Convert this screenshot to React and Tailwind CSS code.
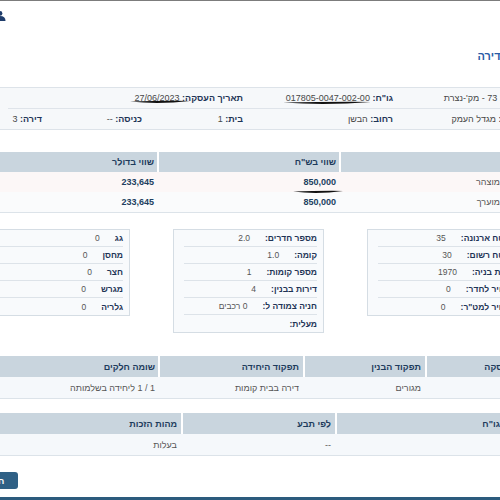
import React from "react";

const T1 = ["w-[189px]", "w-[182px]", "w-[189px]"];
const T1P = ["pr-[14px]", "pr-[3px]", "pr-[3px]"];
const T2 = ["w-[103px]", "w-[122px]", "w-[145px]", "w-[190px]"];
const T2P = ["pr-[6px]", "pr-[4px]", "pr-[4px]", "pr-[3px]"];
const T3 = ["w-[193px]", "w-[154px]", "w-[213px]"];
const T3P = ["pr-[14px]", "pr-[4px]", "pr-[4px]"];

function Scribble({ className }) {
  return (
    <svg className={`absolute pointer-events-none ${className}`} viewBox="0 0 100 6" preserveAspectRatio="none">
      <path d="M0 2.4 Q50 7 100 1.4 Q50 1 0 2.4Z" fill="#111" />
    </svg>
  );
}

function L({ children }) {
  return <span className="font-bold text-[#1e3456]">{children}</span>;
}

function V({ children }) {
  return <span className="text-[#474747]">{children}</span>;
}

function TableRow({ cells, widths, pads, className = "", head = false }) {
  return (
    <div className={`flex ${className}`}>
      {cells.map((c, i) => (
        <div
          key={i}
          className={`${widths[i]} ${pads[i]} shrink-0 flex items-center ${
            i > 0 ? (head ? "border-r-2 border-white" : "border-r-2 border-transparent") : ""
          }`}
        >
          {c}
        </div>
      ))}
    </div>
  );
}

function Box({ rows }) {
  return (
    <div className="w-[151px] shrink-0 border border-[#d5dde4] bg-[#f8fafc] text-[8.5px]">
      {rows.map(([k, v], i) => (
        <div
          key={i}
          className={`h-[17px] ml-[10px] mr-[6px] flex items-center gap-[15px] ${
            i < rows.length - 1 ? "border-b border-[#dde3e9]" : ""
          }`}
        >
          <span className="font-bold text-[#1e3456]">{k}</span>
          <span className="text-[#555]">{v}</span>
        </div>
      ))}
    </div>
  );
}

export default function App() {
  return (
    <div className="w-[500px] h-[500px] overflow-hidden bg-white font-['Liberation_Sans',Arial,sans-serif] text-[9px] leading-[12px] whitespace-nowrap">
      <div dir="rtl" className="w-[560px] -ml-[30px]">
        <div className="h-px bg-[#7c7c7c]" />

        {/* user icon */}
        <div className="h-[30px] flex justify-end pl-[23px] pt-[10px]">
          <svg width="14" height="10" viewBox="0 0 14 10">
            <circle cx="7" cy="2.4" r="2.4" fill="#1f3d6b" />
            <path d="M1.5 10 Q1.5 5 7 5 Q12.5 5 12.5 10Z" fill="#1f3d6b" />
          </svg>
        </div>

        <div className="h-[56px] flex items-center pr-[2px] pb-[6px] text-[11px] leading-[16px] font-bold text-[#2a5ca6]">
          פרטי דירה
        </div>

        {/* info panel */}
        <div className="border-y border-[#dde3e9] bg-[#f6f8fa]">
          <div className="flex h-[20px] items-center pr-[10px]">
            <div className="w-[127px] shrink-0"><L>אזור:</L> <V>73 - מק'-נצרת</V></div>
            <div className="w-[150px] shrink-0">
              <L>גו"ח:</L>{" "}
              <span className="relative inline-block">
                <V>017805-0047-002-00</V>
                <Scribble className="top-[9px] left-[-3px] w-[88px] h-[4px]" />
              </span>
            </div>
            <div className="w-[101px] shrink-0">
              <L>תאריך העסקה:</L>{" "}
              <span className="relative inline-block">
                <V>27/06/2023</V>
                <Scribble className="top-[8px] left-[-5px] w-[60px] h-[4px]" />
              </span>
            </div>
          </div>
          <div className="h-px bg-[#dfe4ea] ml-[38px]" />
          <div className="flex h-[20px] items-center pr-[10px]">
            <div className="w-[127px] shrink-0"><L>ישוב:</L> <V>מגדל העמק</V></div>
            <div className="w-[150px] shrink-0"><L>רחוב:</L> <V>הבשן</V></div>
            <div className="w-[101px] shrink-0"><L>בית:</L> <V>1</V></div>
            <div className="w-[100px] shrink-0"><L>כניסה:</L> <V>--</V></div>
            <div className="flex-1"><L>דירה:</L> <V>3</V></div>
          </div>
        </div>

        {/* values table */}
        <div className="mt-[22px] border-b border-[#dce3e9]">
          <TableRow head widths={T1} pads={T1P} className="h-[20px] bg-[#c9d5de] text-[#1d3b5c] font-bold"
            cells={["", 'שווי בש"ח', "שווי בדולר"]} />
          <TableRow widths={T1} pads={T1P} className="h-[20px] bg-[#fcf7f7] text-[#555]"
            cells={[
              "שווי מוצהר",
              <span key="a" className="relative inline-block font-bold text-[#213f60]">
                850,000
                <Scribble className="top-[14px] left-[-10px] w-[50px] h-[4px]" />
              </span>,
              <span key="b" className="font-bold text-[#213f60]">233,645</span>,
            ]} />
          <TableRow widths={T1} pads={T1P} className="h-[20px] bg-[#fafbfc] text-[#555]"
            cells={[
              "שווי מוערך",
              <span key="a" className="font-bold text-[#213f60]">850,000</span>,
              <span key="b" className="font-bold text-[#213f60]">233,645</span>,
            ]} />
        </div>

        {/* detail boxes */}
        <div className="mt-[16px] flex items-start gap-[43px] pr-[12px]">
          <Box rows={[["שטח ארנונה:", "35"], ["שטח רשום:", "30"], ["שנת בניה:", "1970"], ["מחיר לחדר:", "0"], ['מחיר למט"ר:', "0"]]} />
          <Box rows={[["מספר חדרים:", "2.0"], ["קומה:", "1.0"], ["מספר קומות:", "1"], ["דירות בבנין:", "4"], ["חניה צמודה ל:", "0 רכבים"], ["מעלית:", ""]]} />
          <Box rows={[["גג", "0"], ["מחסן", "0"], ["חצר", "0"], ["מגרש", "0"], ["גלריה", "0"]]} />
        </div>

        {/* usage table */}
        <div className="mt-[23px] border-b border-[#dce3e9]">
          <TableRow head widths={T2} pads={T2P} className="h-[21px] bg-[#c9d5de] text-[#1d3b5c] font-bold"
            cells={["סוג עסקה", "תפקוד הבנין", "תפקוד היחידה", "שומה חלקים"]} />
          <TableRow widths={T2} pads={T2P} className="h-[21px] bg-[#f5f8fb] text-[#555]"
            cells={["מכר", "מגורים", "דירה בבית קומות", "1 / 1 ליחידה בשלמותה"]} />
        </div>

        {/* rights table */}
        <div className="mt-[14px] border-b border-[#dce3e9]">
          <TableRow head widths={T3} pads={T3P} className="h-[21px] bg-[#c9d5de] text-[#1d3b5c] font-bold"
            cells={['לפי גו"ח', "לפי תבע", "מהות הזכות"]} />
          <TableRow widths={T3} pads={T3P} className="h-[21px] bg-[#f5f8fb] text-[#555]"
            cells={["", "--", "בעלות"]} />
        </div>

        <div className="mt-[16px] flex justify-end">
          <button className="w-[48px] h-[17px] rounded-[3px] bg-[#2f6085] text-white text-[9px] font-bold">חזרה</button>
        </div>

        <div className="mt-[8px] h-[4px] bg-[#2c5b7d]" />
      </div>
    </div>
  );
}
